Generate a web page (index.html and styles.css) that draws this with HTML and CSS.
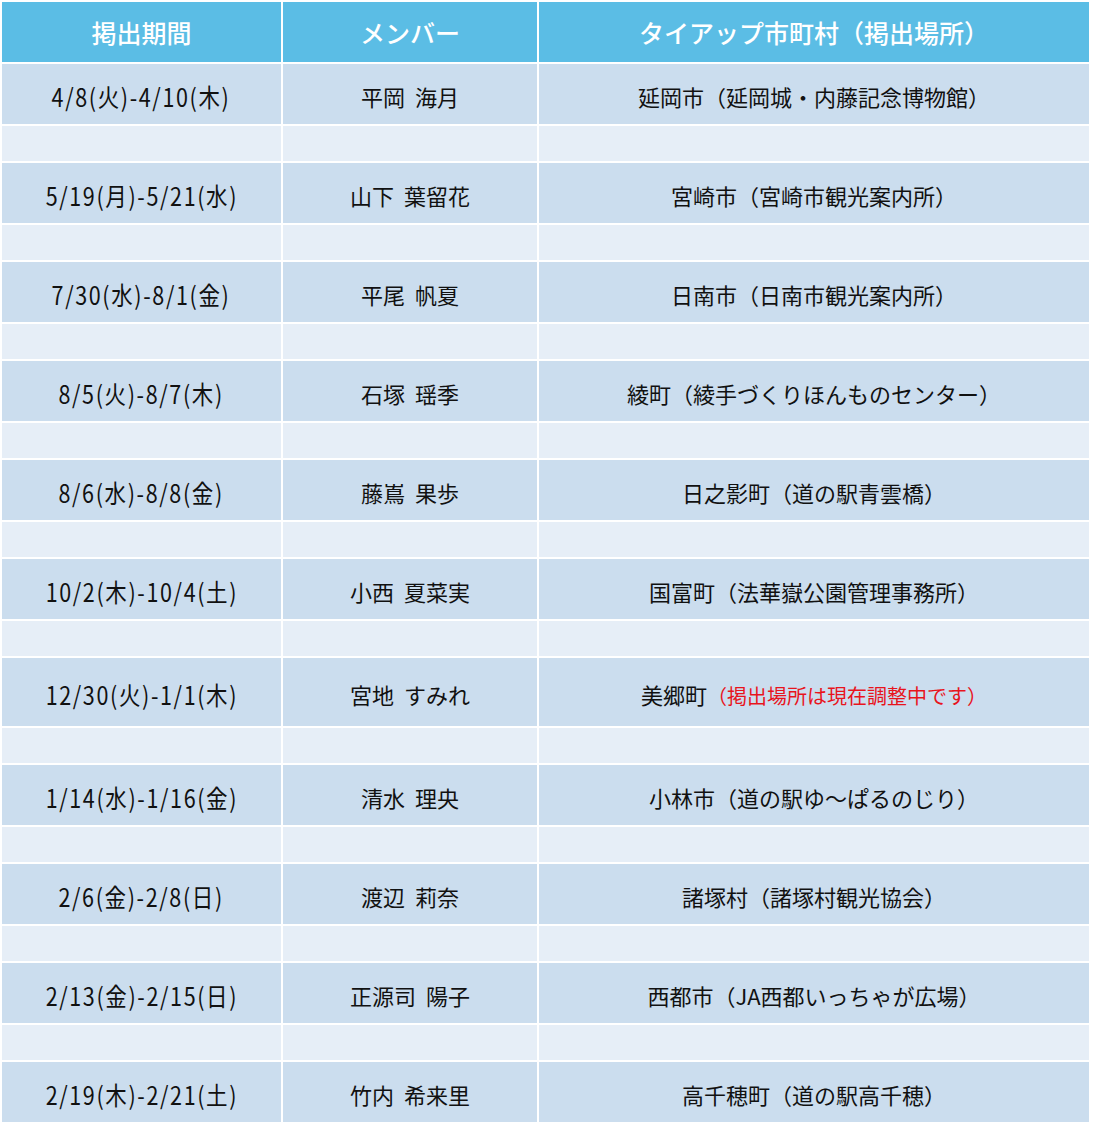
FILE: index.html
```html
<!DOCTYPE html>
<html lang="ja">
<head>
<meta charset="utf-8">
<link rel="stylesheet" href="styles.css">
</head>
<body>
<table class="schedule">
  <colgroup>
    <col class="c-date"><col class="c-name"><col class="c-place">
  </colgroup>
  <thead>
    <tr class="head"><th>掲出期間</th><th>メンバー</th><th>タイアップ市町村（掲出場所）</th></tr>
  </thead>
  <tbody>
    <tr class="row"><td><span class="date">4/8(火)-4/10(木)</span></td><td class="name">平岡 海月</td><td class="place">延岡市（延岡城・内藤記念博物館）</td></tr>
    <tr class="gap"><td></td><td></td><td></td></tr>
    <tr class="row"><td><span class="date">5/19(月)-5/21(水)</span></td><td class="name">山下 葉留花</td><td class="place">宮崎市（宮崎市観光案内所）</td></tr>
    <tr class="gap"><td></td><td></td><td></td></tr>
    <tr class="row"><td><span class="date">7/30(水)-8/1(金)</span></td><td class="name">平尾 帆夏</td><td class="place">日南市（日南市観光案内所）</td></tr>
    <tr class="gap"><td></td><td></td><td></td></tr>
    <tr class="row"><td><span class="date">8/5(火)-8/7(木)</span></td><td class="name">石塚 瑶季</td><td class="place">綾町（綾手づくりほんものセンター）</td></tr>
    <tr class="gap"><td></td><td></td><td></td></tr>
    <tr class="row"><td><span class="date">8/6(水)-8/8(金)</span></td><td class="name">藤嶌 果歩</td><td class="place">日之影町（道の駅青雲橋）</td></tr>
    <tr class="gap"><td></td><td></td><td></td></tr>
    <tr class="row"><td><span class="date">10/2(木)-10/4(土)</span></td><td class="name">小西 夏菜実</td><td class="place">国富町（法華嶽公園管理事務所）</td></tr>
    <tr class="gap"><td></td><td></td><td></td></tr>
    <tr class="row tall"><td><span class="date">12/30(火)-1/1(木)</span></td><td class="name">宮地 すみれ</td><td class="place">美郷町<span class="note">（掲出場所は現在調整中です）</span></td></tr>
    <tr class="gap"><td></td><td></td><td></td></tr>
    <tr class="row"><td><span class="date">1/14(水)-1/16(金)</span></td><td class="name">清水 理央</td><td class="place">小林市（道の駅ゆ～ぱるのじり）</td></tr>
    <tr class="gap"><td></td><td></td><td></td></tr>
    <tr class="row"><td><span class="date">2/6(金)-2/8(日)</span></td><td class="name">渡辺 莉奈</td><td class="place">諸塚村（諸塚村観光協会）</td></tr>
    <tr class="gap"><td></td><td></td><td></td></tr>
    <tr class="row"><td><span class="date">2/13(金)-2/15(日)</span></td><td class="name">正源司 陽子</td><td class="place">西都市（JA西都いっちゃが広場）</td></tr>
    <tr class="gap"><td></td><td></td><td></td></tr>
    <tr class="row"><td><span class="date">2/19(木)-2/21(土)</span></td><td class="name">竹内 希来里</td><td class="place">高千穂町（道の駅高千穂）</td></tr>
  </tbody>
</table>
</body>
</html>
```
FILE: styles.css
```css
html, body {
  margin: 0;
  padding: 0;
  background: #ffffff;
}

body {
  font-family: "Noto Sans CJK JP", "Noto Sans", sans-serif;
  color: #111111;
}

.schedule {
  border-collapse: separate;
  border-spacing: 2px;
  width: 1091px;
  table-layout: fixed;
  background: #ffffff;
}

.c-date { width: 279px; }
.c-name { width: 254px; }
.c-place { width: 550px; }

.schedule th,
.schedule td {
  padding: 0;
  text-align: center;
  vertical-align: middle;
  white-space: nowrap;
}

.head th {
  height: 60px;
  background: #5bbde5;
  color: #ffffff;
  font-size: 25px;
  font-weight: 500;
  line-height: 1;
}

.row td {
  height: 60px;
  background: #cbddee;
  font-size: 22px;
  line-height: 1;
  padding-top: 4px;
  box-sizing: border-box;
}

.row.tall td {
  height: 68px;
}

.gap td {
  height: 35px;
  background: #e6eef7;
}

.date {
  display: inline-block;
  font-size: 25px;
  letter-spacing: 1.9px;
  transform: scaleX(0.86);
}

.name {
  font-size: 23px;
  word-spacing: 5px;
}

.place {
  font-size: 22.5px;
}

.note {
  color: #e8141c;
  font-size: 20px;
}
```
